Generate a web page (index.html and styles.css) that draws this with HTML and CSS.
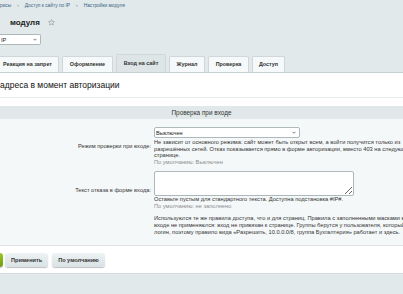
FILE: index.html
```html
<!DOCTYPE html>
<html lang="ru">
<head>
    <meta charset="UTF-8">
    <title>Настройки модуля</title>
    <link rel="stylesheet" href="styles.css">
</head>
<body>
    <div class="crumbs">
        <span>рисы</span><span class="sep">›</span><a>Доступ к сайту по IP</a><span class="sep">›</span><a>Настройки модуля</a>
    </div>

    <div class="title">
        <h1>модуля</h1>
        <svg class="star" width="7" height="7" viewBox="0 0 10 10"><path d="M5 .8l1.2 2.7 2.9.3-2.2 1.9.7 2.9L5 7.1 2.4 8.6l.7-2.9L.9 3.8l2.9-.3z" fill="none" stroke="#8f9ba0" stroke-width=".9"/></svg>
    </div>

    <div class="select site-select">
        <select><option>IP</option></select>
        <svg width="4" height="3" viewBox="0 0 8 5"><path d="M1 1l3 3 3-3" fill="none" stroke="#444" stroke-width="1.4"/></svg>
    </div>

    <div class="tabs">
        <span class="tab tab-ban">Реакция на запрет</span>
        <span class="tab tab-look">Оформление</span>
        <span class="tab tab-login active">Вход на сайт</span>
        <span class="tab tab-log">Журнал</span>
        <span class="tab tab-check">Проверка</span>
        <span class="tab tab-access">Доступ</span>
    </div>

    <div class="content">
        <h2>адреса в момент авторизации</h2>

        <div class="section-head">Проверка при входе</div>

        <div class="form">
            <label class="label">Режим проверки при входе:</label>
            <div class="field">
                <div class="select mode-select">
                    <select><option>Выключен</option></select>
                    <svg width="4" height="3" viewBox="0 0 8 5"><path d="M1 1l3 3 3-3" fill="none" stroke="#444" stroke-width="1.4"/></svg>
                </div>
                <div class="desc">
                    Не зависит от основного режима: сайт может быть открыт всем, а войти получится только из<br>
                    разрешённых сетей. Отказ показывается прямо в форме авторизации, вместо 403 на следующей<br>
                    странице.<br>
                    <span class="default">По умолчанию: Выключен</span>
                </div>
            </div>

            <label class="label">Текст отказа в форме входа:</label>
            <div class="field">
                <textarea></textarea>
                <div class="desc">
                    Оставьте пустым для стандартного текста. Доступна подстановка #IP#.<br>
                    <span class="default">По умолчанию: не заполнено</span>
                </div>
            </div>

            <div></div>
            <div class="field note">
                Используются те же правила доступа, что и для страниц. Правила с заполненными масками в<br>
                входе не применяются: вход не привязан к странице. Группы берутся у пользователя, который вводит<br>
                логин, поэтому правило вида «Разрешить, 10.0.0.0/8, группа Бухгалтерия» работает и здесь.
            </div>
        </div>

        <div class="buttons">
            <button class="btn btn-save">Сохранить</button>
            <button class="btn">Применить</button>
            <button class="btn">По умолчанию</button>
        </div>
    </div>
</body>
</html>
```

FILE: styles.css
```css
* {
    box-sizing: border-box;
}

html, body {
    overflow: hidden;
}

body {
    margin: 0;
    width: 403px;
    height: 294px;
    background: #e1e9ea;
    font-family: "Liberation Sans", Arial, sans-serif;
    color: #333;
}

.crumbs {
    height: 13px;
    line-height: 12px;
    font-size: 4.8px;
    white-space: nowrap;
    color: #3b6485;
}

.crumbs .sep {
    margin: 0 6px;
    color: #6d8595;
}

.title {
    height: 18px;
    display: flex;
    align-items: center;
    gap: 8px;
    padding-left: 10px;
}

.title h1 {
    margin: 0;
    font-size: 8px;
    font-weight: bold;
    color: #222;
}

.select {
    display: flex;
    align-items: center;
    height: 11px;
    background: #fff;
    border: 1px solid #aeb8bb;
    border-radius: 2px;
    padding-right: 3px;
}

.select select {
    flex: 1;
    min-width: 0;
    height: 100%;
    padding: 0 0 0 1px;
    border: none;
    background: transparent;
    font-family: inherit;
    font-size: 5.6px;
    color: #222;
    appearance: none;
    -webkit-appearance: none;
    outline: none;
}

.site-select {
    width: 41px;
    margin-top: 3px;
    border-left: none;
    border-radius: 0 2px 2px 0;
}

.tabs {
    display: flex;
    align-items: flex-end;
    gap: 3px;
    height: 19px;
    margin-top: 9px;
    margin-left: -4px;
    border-bottom: 1px solid #c6cfd2;
}

.tab {
    flex: none;
    height: 16px;
    line-height: 15px;
    text-align: center;
    font-size: 5.4px;
    font-weight: bold;
    color: #333;
    white-space: nowrap;
    background: #f6f9f9;
    border: 1px solid #cfd7da;
    border-bottom: none;
    border-radius: 2px 2px 0 0;
}

.tab-ban { width: 63px; }
.tab-look { width: 51px; }
.tab-login { width: 50px; }
.tab-log { width: 36px; }
.tab-check { width: 41px; }
.tab-access { width: 33px; }

.tab.active {
    height: 18px;
    line-height: 17px;
    background: #dde5e7;
}

.content {
    background: #fff;
}

.content h2 {
    margin: 0;
    height: 25px;
    line-height: 24px;
    font-size: 8.5px;
    font-weight: normal;
    color: #111;
    white-space: nowrap;
    border-bottom: 1px solid #e5eaeb;
}

.section-head {
    margin-top: 8px;
    height: 13px;
    line-height: 13px;
    text-align: center;
    font-size: 6.4px;
    color: #333;
    background: #e0e8ea;
}

.form {
    display: grid;
    grid-template-columns: 154px minmax(0, 1fr);
    row-gap: 6px;
    padding: 8px 0 8px;
    background: #f5f8f9;
}

.label {
    align-self: center;
    padding-right: 3px;
    text-align: right;
    font-size: 5.7px;
    color: #333;
    white-space: nowrap;
}

.field {
    white-space: nowrap;
}

.mode-select {
    width: 146px;
}

textarea {
    display: block;
    width: 200px;
    height: 25px;
    margin: 0;
    border: 1px solid #aeb8bb;
    border-radius: 2px;
    background: #fff;
}

.desc {
    margin-top: 1px;
    font-size: 5.7px;
    line-height: 6.6px;
    color: #333;
}

textarea + .desc {
    margin-top: 0;
}

.default {
    color: #8d8d8d;
}

.note {
    margin-top: -1px;
    font-size: 5.7px;
    line-height: 7.4px;
    color: #333;
}

.buttons {
    display: flex;
    gap: 4px;
    padding: 7px 0 6px;
    border-top: 1px solid #dde4e6;
    border-bottom: 1px solid #d3dcdf;
}

.btn {
    height: 14px;
    padding: 0 6px;
    font-family: inherit;
    font-size: 5.6px;
    font-weight: bold;
    color: #333;
    border: none;
    border-radius: 3px;
    background: linear-gradient(#eef3f4, #d8e1e4);
    box-shadow: 0 1px 1px rgba(0, 0, 0, 0.25);
    cursor: pointer;
}

.btn-save {
    width: 44px;
    margin-left: -41px;
    margin-right: -2px;
    color: #fff;
    background: linear-gradient(#9cc62a, #6e9e0e);
}
```
